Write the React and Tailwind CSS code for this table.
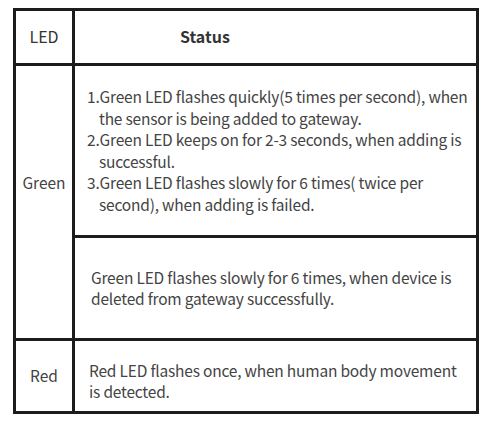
import React from 'react';

const font = { fontFamily: '"Noto Sans CJK SC", "Noto Sans", sans-serif' };

export default function App() {
    return (
        <div className="w-[485px] h-[422px] bg-white pt-[8px] pl-[13px]" style={font}>
            <div className="w-[466px] border-[3px] border-[#1c1c1c] text-[#444] text-[15.5px] leading-[21.5px] tracking-[-0.2px]">
                {/* Header */}
                <div className="flex h-[55px] border-b-[3px] border-[#1c1c1c] text-[16px] tracking-normal">
                    <div className="w-[59px] border-r-[3px] border-[#1c1c1c] flex items-center justify-center text-[#333]">
                        LED
                    </div>
                    <div className="flex-1 flex items-center pl-[105px] font-bold text-[#333]">
                        Status
                    </div>
                </div>

                {/* Green */}
                <div className="flex border-b-[3px] border-[#1c1c1c]">
                    <div className="w-[59px] border-r-[3px] border-[#1c1c1c] flex items-center justify-center pb-[38px] tracking-normal">
                        Green
                    </div>
                    <div className="flex-1 flex flex-col">
                        <div className="h-[172px] border-b-[3px] border-[#1c1c1c] flex flex-col justify-center pl-[24px] pr-[2px]">
                            <p className="-indent-3">1.Green LED flashes quickly(5 times per second), when the sensor is being added to gateway.</p>
                            <p className="-indent-3">2.Green LED keeps on for 2-3 seconds, when adding is successful.</p>
                            <p className="-indent-3">3.Green LED flashes slowly for 6 times( twice per second), when adding is failed.</p>
                        </div>
                        <div className="h-[100px] flex flex-col justify-center pl-[16px] pr-[2px]">
                            <p>Green LED flashes slowly for 6 times, when device is deleted from gateway successfully.</p>
                        </div>
                    </div>
                </div>

                {/* Red */}
                <div className="flex h-[70px]">
                    <div className="w-[59px] border-r-[3px] border-[#1c1c1c] flex items-center justify-center tracking-normal">
                        Red
                    </div>
                    <div className="flex-1 flex items-center pl-[14px] pr-[12px] pt-[10px]">
                        <p>Red LED flashes once, when human body movement is detected.</p>
                    </div>
                </div>
            </div>
        </div>
    );
}
